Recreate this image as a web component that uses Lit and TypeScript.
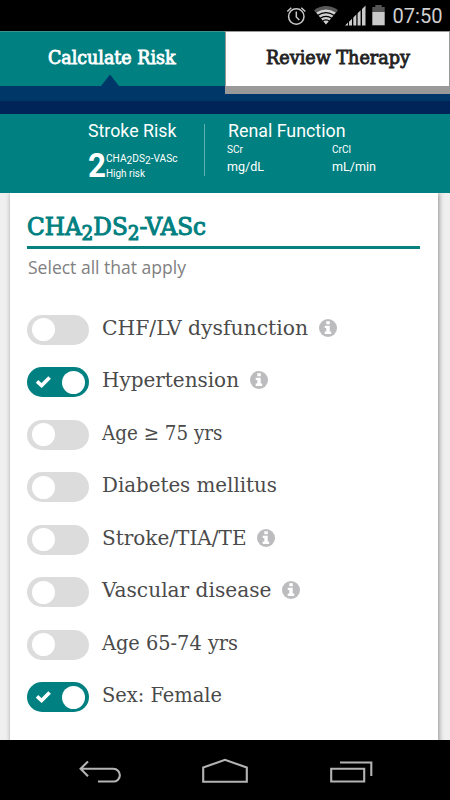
import { LitElement, html, svg, css, nothing } from "lit";
import { customElement, property } from "lit/decorators.js";

type Part = string | { sub: string };

/** One line of real text, fitted to a given advance width. */
@customElement("fit-text")
class FitText extends LitElement {
  @property({ attribute: false }) parts: Part[] = [];
  @property({ type: Number }) width = 100;
  @property({ type: Number }) height = 20;
  @property({ type: Number }) base = 15;
  @property({ type: Number }) drop = 3;

  static styles = css`
    :host { display: block; flex: none; }
    svg { display: block; overflow: visible; }
    text { fill: currentColor; stroke: currentColor; stroke-width: var(--weight, 0); }
    .sub { font-size: var(--sub, 0.8em); }
  `;

  render() {
    let shift = 0;
    const spans = this.parts.map((p) => {
      const target = typeof p === "string" ? 0 : this.drop;
      const dy = target - shift;
      shift = target;
      return typeof p === "string"
        ? svg`<tspan dy=${dy}>${p}</tspan>`
        : svg`<tspan class="sub" dy=${dy}>${p.sub}</tspan>`;
    });
    return html`<svg width=${this.width} height=${this.height}><text x="0" y=${this.base} textLength=${this.width} lengthAdjust="spacingAndGlyphs">${spans}</text></svg>`;
  }
}

@customElement("risk-row")
class RiskRow extends LitElement {
  @property() label = "";
  @property({ type: Number }) width = 100;
  @property({ type: Boolean }) on = false;
  @property({ type: Boolean }) info = false;

  static styles = css`
    :host { display: flex; align-items: center; height: 52.5px; color: #4a4a4a; font: 20px "Roboto Slab", "DejaVu Serif Condensed", "DejaVu Serif", serif; }
    .toggle { box-sizing: border-box; display: flex; align-items: center; flex: none; width: 61.5px; height: 30px; border-radius: 15px; padding: 0 3.5px 0 4.5px; background: #dcdcdc; margin-right: 13px; }
    .toggle.on { background: #008080; justify-content: space-between; }
    .knob { width: 23px; height: 23px; border-radius: 50%; background: #fff; }
    .check { display: block; margin-left: 3px; }
    .info { display: block; margin: -4px 0 0 11px; }
  `;

  render() {
    return html`
      <div class="toggle ${this.on ? "on" : ""}">
        ${this.on
          ? html`<svg class="check" width="17" height="14" viewBox="0 0 17 14"><path d="M2 6.4 L6.6 10.6 L14.6 2.4" fill="none" stroke="#fff" stroke-width="3.6" /></svg>`
          : nothing}
        <div class="knob"></div>
      </div>
      <fit-text .parts=${[this.label]} .width=${this.width} .height=${30} .base=${20}></fit-text>
      ${this.info
        ? html`<svg class="info" width="18" height="18" viewBox="0 0 18 18"><circle cx="9" cy="9" r="9" fill="#bcbcbe" /><path d="M7.3 2.3h3.5v3H7.3zM5.7 6.8h5v5.8h1.5v2.3H5.7v-2.3h1.6V9.1H5.7z" fill="#fff" /></svg>`
        : nothing}
    `;
  }
}

@customElement("app-root")
class AppRoot extends LitElement {
  static styles = css`
    :host { display: flex; flex-direction: column; width: 450px; height: 800px; overflow: hidden; background: #000; font-family: Roboto, sans-serif; }
    svg { display: block; }
    .status { height: 31px; flex: none; display: flex; justify-content: flex-end; color: #d0d0d0; font-size: 20px; padding-right: 8px; }
    .tabs { flex: none; display: flex; height: 70px; background: #003769; font: 18px "Roboto Slab", "DejaVu Serif Condensed", "DejaVu Serif", serif; --weight: 0.8px; }
    .tab { box-sizing: border-box; width: 225px; }
    .active { height: 55px; background: #008080; color: #fff; border-top: 1px solid #3a8f8f; padding: 13px 0 0 48px; display: flex; flex-direction: column; }
    .pointer { margin: 9.5px 0 0 53px; width: 18px; height: 11.5px; background: #003769; clip-path: polygon(50% 0, 100% 100%, 0 100%); }
    .other { height: 63px; background: #fff; color: #222; border: 1px solid #999; border-bottom: 8px solid #999; padding: 13px 0 0 39.5px; }
    .strip { flex: none; height: 12.5px; background: #002458; }
    .summary { flex: none; box-sizing: border-box; height: 79px; background: #008080; color: #fff; display: flex; padding: 10.5px 0 0 87.5px; }
    .stroke { width: 116px; }
    .t17 { font-size: 17.5px; }
    .score { display: flex; margin-top: 9px; }
    .big { font-size: 33px; font-weight: 700; margin-right: 0.5px; }
    .t11 { font-size: 11px; }
    .t10 { font-size: 10px; }
    .t13 { font-size: 13px; }
    .rule { width: 1px; height: 52px; background: #5fb0b0; margin-right: 22px; }
    .renal { width: 210px; }
    .renal .t17 { margin-left: 1px; }
    .units { display: flex; }
    .unit { width: 105px; }
    .body { flex: none; height: 547.5px; background: #efefef; overflow: hidden; display: flex; padding-left: 10px; }
    .card { box-sizing: border-box; width: 428px; height: 560px; background: #fff; box-shadow: 1px 0 5px rgba(0,0,0,.42); padding: 16px 18px 0 17px; }
    .title { color: #008080; font: 25px "Roboto Slab", "DejaVu Serif Condensed", "DejaVu Serif", serif; --weight: 1px; }
    .line { height: 3px; background: #088080; margin-top: 2px; }
    .hint { color: #808080; font: 17.5px "Open Sans", "Noto Sans", sans-serif; margin: 9.5px 0 23.5px 0.5px; }
    .nav { flex: none; height: 60px; background: #000; }
  `;

  render() {
    return html`
      <div class="status">
        <svg width="162" height="31" viewBox="280 0 162 31">
          <g fill="none" stroke="#c8c8c8">
            <circle cx="296.3" cy="16.5" r="7.7" stroke-width="1.5" />
            <path d="M296.3 11.5v5.5l3 3M287.3 11.5l4-3.8M301.3 7.7l4 3.8" stroke-width="1.5" />
          </g>
          <path d="M326 24.5L314 10.2Q326 2 338 10.2z" fill="#585858" />
          <path d="M326 24.5L316.3 12.6Q326 6.5 335.7 12.6z" fill="#d2d2d2" />
          <path d="M317.5 15.6Q326 9.8 334.5 15.6M319.8 18.6Q326 14 332.2 18.6M322 21.4Q326 18.4 330 21.4" fill="none" stroke="#000" stroke-width="1.2" />
          <g fill="#cacaca">
            <path d="M345 25.5l3-3v3zM349 21.7l3-3v6.8h-3zM353.3 17.5l3-3v11h-3zM357.6 13.3l3-3v15.2h-3zM362 9l3.5-3.5v20H362z" />
            <path d="M372.3 12h12.4v13.3h-12.4z" />
          </g>
          <path d="M372.3 12V7h3V5h6.4v2h3v5z" fill="#555" />
          <text x="392.5" y="23.3" textLength="50" lengthAdjust="spacingAndGlyphs" fill="#d0d0d0">07:50</text>
        </svg>
      </div>
      <div class="tabs">
        <div class="tab active">
          <fit-text .parts=${["Calculate Risk"]} .width=${127.5} .height=${20} .base=${19}></fit-text>
          <div class="pointer"></div>
        </div>
        <div class="tab other">
          <fit-text .parts=${["Review Therapy"]} .width=${144} .height=${20} .base=${19}></fit-text>
        </div>
      </div>
      <div class="strip"></div>
      <div class="summary">
        <div class="stroke">
          <fit-text class="t17" .parts=${["Stroke Risk"]} .width=${88.5} .height=${20} .base=${13}></fit-text>
          <div class="score">
            <fit-text class="big" .parts=${["2"]} .width=${18} .height=${26} .base=${23.5}></fit-text>
            <div>
              <fit-text class="t11" .parts=${["CHA", { sub: "2" }, "DS", { sub: "2" }, "-VASc"]} .width=${71.5} .height=${15} .base=${9} .drop=${2} style="--sub:1em"></fit-text>
              <fit-text class="t11" .parts=${["High risk"]} .width=${39} .height=${12} .base=${8.5}></fit-text>
            </div>
          </div>
        </div>
        <div class="rule"></div>
        <div class="renal">
          <fit-text class="t17" .parts=${["Renal Function"]} .width=${117.5} .height=${19.5} .base=${13}></fit-text>
          <div class="units">
            <div class="unit">
              <fit-text class="t10" .parts=${["SCr"]} .width=${16} .height=${12} .base=${9}></fit-text>
              <fit-text class="t13" .parts=${["mg/dL"]} .width=${37} .height=${20} .base=${15}></fit-text>
            </div>
            <div class="unit">
              <fit-text class="t10" .parts=${["CrCl"]} .width=${19} .height=${12} .base=${9}></fit-text>
              <fit-text class="t13" .parts=${["mL/min"]} .width=${44} .height=${20} .base=${15}></fit-text>
            </div>
          </div>
        </div>
      </div>
      <div class="body">
        <div class="card">
          <fit-text class="title" .parts=${["CHA", { sub: "2" }, "DS", { sub: "2" }, "-VASc"]} .width=${179} .height=${35} .base=${26} .drop=${5}></fit-text>
          <div class="line"></div>
          <fit-text class="hint" .parts=${["Select all that apply"]} .width=${158} .height=${22} .base=${15.5}></fit-text>
          <risk-row label="CHF/LV dysfunction" width="206" info></risk-row>
          <risk-row label="Hypertension" width="137" on info></risk-row>
          <risk-row label="Age ≥ 75 yrs" width="120.5"></risk-row>
          <risk-row label="Diabetes mellitus" width="175"></risk-row>
          <risk-row label="Stroke/TIA/TE" width="144.5" info></risk-row>
          <risk-row label="Vascular disease" width="169.5" info></risk-row>
          <risk-row label="Age 65-74 yrs" width="136"></risk-row>
          <risk-row label="Sex: Female" width="120" on></risk-row>
        </div>
      </div>
      <div class="nav">
        <svg width="450" height="60" viewBox="0 740 450 60" fill="none" stroke="#b4b4b4" stroke-width="2.1">
          <path d="M88 761.5l-7.4 7.3 7.4 7.5M80.5 768.8H113.5a6.3 6.3 0 0 1 0 12.7H98" />
          <path d="M203.2 781.7V767.6L225 759.8l21.8 7.8v14.1z" />
          <path d="M331.2 768.8h33v12.7h-33zM340 762.5h31.3V776" />
        </svg>
      </div>
    `;
  }
}
